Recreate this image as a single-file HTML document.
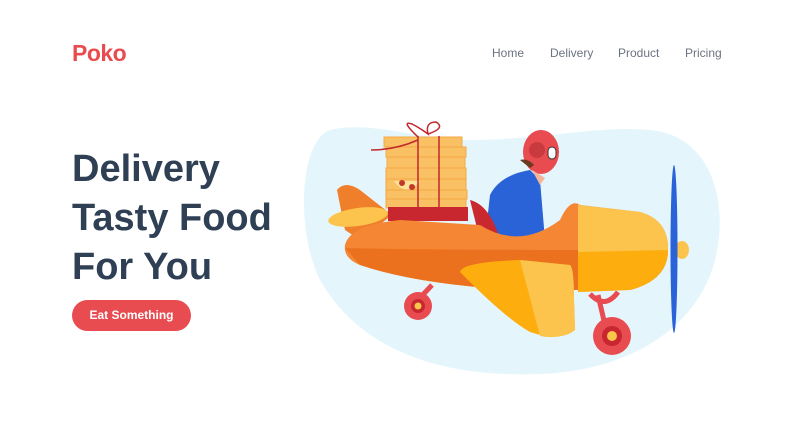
<!DOCTYPE html>
<html><head><meta charset="utf-8"><style>
body{margin:0;width:791px;height:445px;background:#fff;font-family:"Liberation Sans",sans-serif;position:relative;overflow:hidden}
.logo{position:absolute;left:72px;top:40px;font-size:23px;font-weight:bold;color:#e84c51;letter-spacing:-0.5px}
.nav{position:absolute;top:46px;font-size:12px;color:#6b7380}
h1{position:absolute;left:72px;top:145px;margin:0;font-size:38px;line-height:49px;color:#2f3f54;font-weight:bold}
.btn{position:absolute;left:72px;top:300px;width:119px;height:31px;border-radius:16px;background:#e84c51;color:#fff;font-size:12px;font-weight:bold;text-align:center;line-height:31px}
svg{position:absolute;left:0;top:0}
</style></head><body>
<div class="logo">Poko</div>
<div class="nav" style="left:492px">Home</div>
<div class="nav" style="left:550px">Delivery</div>
<div class="nav" style="left:618px">Product</div>
<div class="nav" style="left:685px">Pricing</div>
<h1>Delivery<br>Tasty Food<br>For You</h1>
<div class="btn">Eat Something</div>
<svg width="791" height="445" viewBox="0 0 791 445">
<path d="M330 130 C370 120 420 140 470 140 C540 140 600 125 650 130 C710 135 730 200 715 260 C700 320 640 370 540 374 C440 378 360 350 320 280 C295 230 300 140 330 130Z" fill="#e4f6fc"/>
<!-- pizza boxes -->
<g fill="#f9c064" stroke="#f3a946" stroke-width="1">
<rect x="384" y="137" width="78" height="10"/><rect x="386" y="147" width="80" height="10"/>
<rect x="387" y="157" width="78" height="11"/><rect x="386" y="168" width="80" height="11"/>
<rect x="386" y="179" width="80" height="11"/><rect x="386" y="190" width="81" height="9"/>
<rect x="386" y="199" width="80" height="9"/></g>
<path d="M394 181 Q406 198 420 181Z" fill="#fde39a"/>
<circle cx="402" cy="183" r="3" fill="#c0392b"/><circle cx="412" cy="187" r="3" fill="#c0392b"/>
<path d="M418 136 V208 M439 136 V208 M418 140 Q395 150 371 150 M418 137 Q400 120 412 124 Q420 128 428 134 Q425 122 436 122 Q446 128 428 134" stroke="#c1272d" stroke-width="1.5" fill="none"/>
<!-- tail -->
<path d="M337 190 Q345 180 360 190 L392 215 L360 240 L345 230Z" fill="#f07f2c"/>
<ellipse cx="358" cy="217" rx="30" ry="9" fill="#fcc44c" transform="rotate(-8 358 217)"/>
<rect x="388" y="207" width="80" height="14" fill="#c8272f"/>
<!-- pilot -->
<path d="M485 240 L490 195 Q500 175 530 170 L540 180 L545 240Z" fill="#2a62d8"/>
<path d="M470 200 Q490 205 500 240 L480 240Z" fill="#c9282e"/>
<ellipse cx="541" cy="152" rx="18" ry="22" fill="#e84c51"/>
<circle cx="537" cy="150" r="8" fill="#c83a3e"/>
<rect x="548" y="147" width="8" height="12" rx="4" fill="#fff" stroke="#333"/>
<path d="M520 160 Q528 158 534 165 L530 168Z" fill="#6b3a20"/>
<path d="M532 170 L545 178 L540 185Z" fill="#f6b49a"/>
<!-- fuselage -->
<path d="M345 245 Q350 225 400 220 L480 225 Q520 250 560 220 Q570 198 580 205 L640 212 Q668 220 668 248 Q668 280 630 290 L520 290 Q420 285 360 265 Q343 258 345 245Z" fill="#f58634"/>
<path d="M345 248 Q420 250 668 250 Q668 280 630 290 L520 290 Q420 285 360 265Z" fill="#ec711e"/>
<path d="M578 205 L640 212 Q668 220 668 248 Q668 280 630 290 L578 292Z" fill="#fcc44c"/>
<path d="M578 252 L668 250 Q668 280 630 290 L578 292Z" fill="#fdad0e"/>
<ellipse cx="682" cy="250" rx="7" ry="9" fill="#fcc44c"/>
<!-- wing -->
<path d="M460 272 Q462 262 520 260 L570 265 Q574 268 574 300 L575 330 Q560 342 530 332 Q505 318 460 272Z" fill="#fdad0e"/>
<path d="M520 260 L570 265 Q574 268 574 300 L575 330 Q560 340 540 336Z" fill="#fcc44c"/>
<!-- gear -->
<path d="M418 300 L432 285 M605 325 L598 295 M590 294 Q605 310 618 292" stroke="#e84c51" stroke-width="5" fill="none"/>
<circle cx="418" cy="306" r="14" fill="#e84c51"/><circle cx="418" cy="306" r="7" fill="#c8272f"/><circle cx="418" cy="306" r="3.5" fill="#fcc44c"/>
<circle cx="612" cy="336" r="19" fill="#e84c51"/><circle cx="612" cy="336" r="10" fill="#c8272f"/><circle cx="612" cy="336" r="5" fill="#fcc44c"/>
<!-- propeller -->
<ellipse cx="674" cy="249" rx="3.5" ry="84" fill="#2a62d8"/>
</svg>
</body></html>
